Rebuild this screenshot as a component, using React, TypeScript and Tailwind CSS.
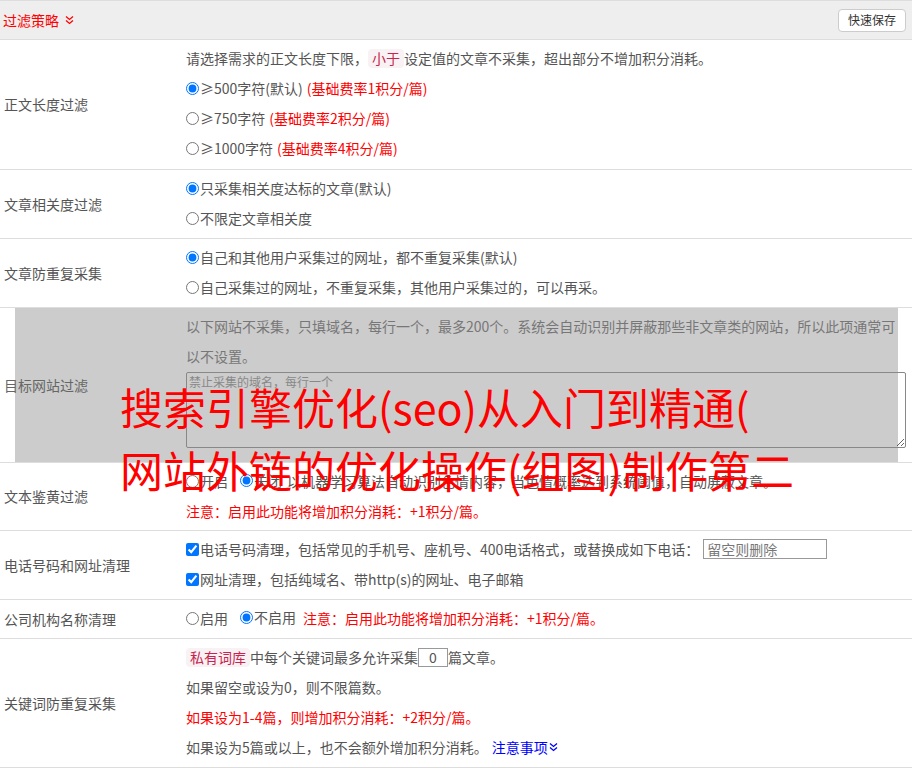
import React from 'react';

// Double-down chevron used next to section titles and links
function DoubleChevron({ className }: { className?: string }) {
  return (
    <svg width="9" height="10" viewBox="0 0 9 10" className={className}>
      <path
        d="M1 1.5l3.5 3L8 1.5M1 5.5l3.5 3L8 5.5"
        stroke="currentColor"
        strokeWidth="1.3"
        fill="none"
      />
    </svg>
  );
}

function Row({
  label,
  children,
  labelClass = 'text-[#555]',
  bodyClass = 'pb-[5px]',
}: {
  label: string;
  children: React.ReactNode;
  labelClass?: string;
  bodyClass?: string;
}) {
  return (
    <div className="grid grid-cols-[186px_1fr] border-b border-[#ddd]">
      <div className={`flex items-center pl-1 ${labelClass}`}>{label}</div>
      <div className={`pt-[3px] pr-[6px] ${bodyClass}`}>{children}</div>
    </div>
  );
}

function Line({ children, className = '' }: { children: React.ReactNode; className?: string }) {
  return <div className={`flex h-[30px] items-center whitespace-nowrap ${className}`}>{children}</div>;
}

function Radio({ name, checked, children }: { name: string; checked?: boolean; children: React.ReactNode }) {
  return (
    <label className="inline-flex items-center">
      <input type="radio" name={name} defaultChecked={checked} className="m-0 mr-px h-[13px] w-[13px]" />
      {children}
    </label>
  );
}

function Check({ children }: { children: React.ReactNode }) {
  return (
    <label className="inline-flex items-center">
      <input type="checkbox" defaultChecked className="m-0 mr-px h-[13px] w-[13px]" />
      {children}
    </label>
  );
}

function Tag({ children }: { children: React.ReactNode }) {
  return <span className="rounded-[4px] bg-[#f9f2f4] px-1 leading-[19px] text-[#c7254e]">{children}</span>;
}

export default function App() {
  return (
    <div className="relative min-h-screen bg-white font-['Noto_Sans_CJK_SC',sans-serif] text-[14px] text-[#555]">
      {/* Section header */}
      <div className="flex h-10 items-center justify-between border-y border-[#ddd] bg-[#eee] pl-[3px] pr-[6px]">
        <div className="flex items-center gap-[6px] text-[#f00]">
          <span>过滤策略</span>
          <DoubleChevron />
        </div>
        <button className="h-[23px] rounded-[4px] border border-[#ccc] bg-white px-[9px] text-[12px] text-[#333]">
          快速保存
        </button>
      </div>

      <Row label="正文长度过滤" bodyClass="pb-[6px]">
        <Line>
          请选择需求的正文长度下限，<Tag>小于</Tag>设定值的文章不采集，超出部分不增加积分消耗。
        </Line>
        <Line>
          <Radio name="len" checked>
            ≥500字符(默认)
          </Radio>
          <span className="ml-1 text-[#f00]">(基础费率1积分/篇)</span>
        </Line>
        <Line>
          <Radio name="len">≥750字符</Radio>
          <span className="ml-1 text-[#f00]">(基础费率2积分/篇)</span>
        </Line>
        <Line>
          <Radio name="len">≥1000字符</Radio>
          <span className="ml-1 text-[#f00]">(基础费率4积分/篇)</span>
        </Line>
      </Row>

      <Row label="文章相关度过滤">
        <Line>
          <Radio name="rel" checked>
            只采集相关度达标的文章(默认)
          </Radio>
        </Line>
        <Line>
          <Radio name="rel">不限定文章相关度</Radio>
        </Line>
      </Row>

      <Row label="文章防重复采集">
        <Line>
          <Radio name="dup" checked>
            自己和其他用户采集过的网址，都不重复采集(默认)
          </Radio>
        </Line>
        <Line>
          <Radio name="dup">自己采集过的网址，不重复采集，其他用户采集过的，可以再采。</Radio>
        </Line>
      </Row>

      {/* Disabled-looking block with grey shade */}
      <div className="relative">
        <div className="absolute bottom-[1px] left-[15px] top-0 w-[883px] bg-[#ccc]" />
        <div className="relative">
          <Row label="目标网站过滤" labelClass="text-[#666]" bodyClass="pb-[14px]">
            <Line className="text-[#777]">
              以下网站不采集，只填域名，每行一个，最多200个。系统会自动识别并屏蔽那些非文章类的网站，所以此项通常可
            </Line>
            <Line className="text-[#777]">以不设置。</Line>
            <textarea
              placeholder="禁止采集的域名，每行一个"
              className="mt-px block h-[76px] w-[720px] rounded-[2px] border border-[#888] bg-transparent px-[2px] py-0 text-[12px] leading-[18px] placeholder:text-[#888]"
            />
          </Row>
        </div>
      </div>

      <Row label="文本鉴黄过滤" bodyClass="pb-[4px]">
        <Line>
          <Radio name="porn">开启</Radio>
          <span className="ml-3">
            <Radio name="porn" checked>
              关闭
            </Radio>
          </span>
          <span className="ml-[5px]">以机器学习算法自动识别色情内容，当色情概率达到系统阈值，自动屏蔽文章。</span>
        </Line>
        <Line className="text-[#f00]">注意：启用此功能将增加积分消耗：+1积分/篇。</Line>
      </Row>

      <Row label="电话号码和网址清理">
        <Line>
          <Check>电话号码清理，包括常见的手机号、座机号、400电话格式，或替换成如下电话：</Check>
          <input
            placeholder="留空则删除"
            className="ml-1 h-5 w-[124px] border border-[#999] px-[3px] text-[14px] outline-none placeholder:text-[#777]"
          />
        </Line>
        <Line>
          <Check>网址清理，包括纯域名、带http(s)的网址、电子邮箱</Check>
        </Line>
      </Row>

      <Row label="公司机构名称清理">
        <Line>
          <Radio name="org">启用</Radio>
          <span className="ml-3">
            <Radio name="org" checked>
              不启用
            </Radio>
          </span>
          <span className="ml-[7px] text-[#f00]">注意：启用此功能将增加积分消耗：+1积分/篇。</span>
        </Line>
      </Row>

      <Row label="关键词防重复采集">
        <Line>
          <Tag>私有词库</Tag>中每个关键词最多允许采集
          <input
            defaultValue="0"
            className="h-[19px] w-[30px] border border-[#999] text-center text-[14px] text-[#555] outline-none"
          />
          篇文章。
        </Line>
        <Line>如果留空或设为0，则不限篇数。</Line>
        <Line className="text-[#f00]">如果设为1-4篇，则增加积分消耗：+2积分/篇。</Line>
        <Line>
          如果设为5篇或以上，也不会额外增加积分消耗。
          <span className="ml-[4px] inline-flex items-center text-[#00f]">
            注意事项
            <DoubleChevron className="ml-px" />
          </span>
        </Line>
      </Row>

      {/* Red watermark over the page */}
      <div className="pointer-events-none absolute left-[120px] top-[375px] z-20 whitespace-nowrap text-[43px] leading-[63px] text-[#f00]">
        <div>搜索引擎优化(seo)从入门到精通(</div>
        <div>网站外链的优化操作(组图)制作第二</div>
      </div>
    </div>
  );
}
